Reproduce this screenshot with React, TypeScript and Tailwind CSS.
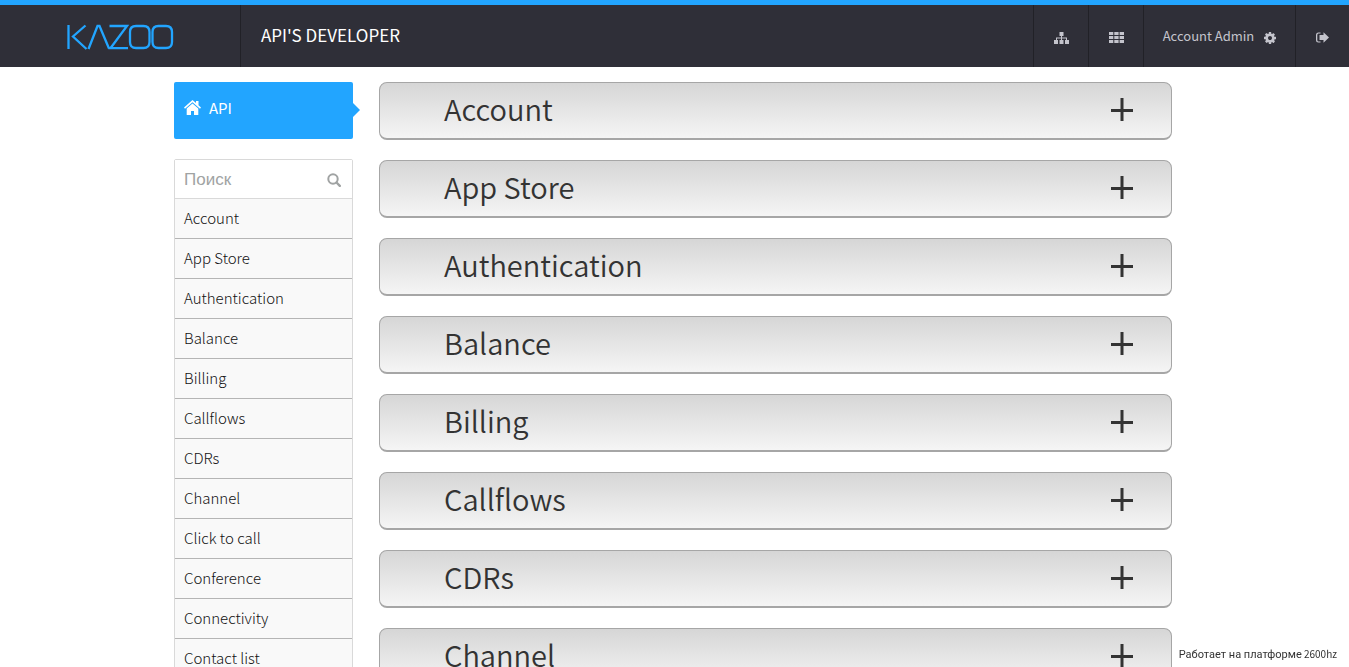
import React from "react";

const topics = [
  "Account", "App Store", "Authentication", "Balance", "Billing", "Callflows",
  "CDRs", "Channel", "Click to call", "Conference", "Connectivity", "Contact list",
];

function Logo() {
  return (
    <svg viewBox="0 0 108 28" className="h-7 w-[108px]" fill="none" stroke="#22a5ff" strokeWidth="2.300">
      <path d="M2.500 2v24M19.500 2.500L7 13.500 20.500 26M22.500 26L31.500 3h2L43 25.500M43.500 3H61L44.500 25.200H62" />
      <path d="M70 3h7.500q6 0 6 6v10q0 6-6 6H70q-6 0-6-6V9q0-6 6-6zM92.500 3h7.500q6 0 6 6v10q0 6-6 6h-7.500q-6 0-6-6V9q0-6 6-6z" />
    </svg>
  );
}

function SitemapIcon() {
  return (
    <svg viewBox="0 0 15 12" className="h-3 w-[15px]" fill="currentColor">
      <path d="M5.500 0h4v4H8v1.500h5V8h2v4h-4V8h1V6.500H8V8h1.500v4h-4V8H7V6.500H3V8h1v4H0V8h2V5.500h5V4H5.500z" />
    </svg>
  );
}

function GridIcon() {
  return (
    <svg viewBox="0 0 15 11" className="h-[11px] w-[15px]" fill="currentColor">
      <path d="M0 0h4.300v3H0zM5.300 0h4.300v3H5.300zM10.600 0H15v3h-4.400zM0 4h4.300v3H0zM5.300 4h4.300v3H5.300zM10.600 4H15v3h-4.400zM0 8h4.300v3H0zM5.300 8h4.300v3H5.300zM10.600 8H15v3h-4.400z" />
    </svg>
  );
}

function CogIcon() {
  return (
    <svg viewBox="0 128 1536 1536" className="mt-1 size-3" fill="currentColor">
      <path d="M1024 896q0-106-75-181t-181-75-181 75-75 181 75 181 181 75 181-75 75-181zm512-109v222q0 12-8 23t-20 13l-185 28q-19 54-39 91 35 50 107 138 10 12 10 25t-9 23q-27 37-99 108t-94 71q-12 0-26-9l-138-108q-44 23-91 38-16 136-29 186-7 28-36 28h-222q-14 0-24.500-8.500t-11.500-21.500l-28-184q-49-16-90-37l-141 107q-10 9-25 9-14 0-25-11-126-114-165-168-7-10-7-23 0-12 8-23 15-21 51-66.500t54-70.500q-27-50-41-99l-183-27q-13-2-21-12.500t-8-23.500v-222q0-12 8-23t19-13l186-28q14-46 39-92-40-57-107-138-10-12-10-24 0-10 9-23 26-36 98.500-107.500t94.500-71.500q13 0 26 10l138 107q44-23 91-38 16-136 29-186 7-28 36-28h222q14 0 24.500 8.500t11.500 21.500l28 184q49 16 90 37l142-107q9-9 24-9 13 0 25 10 129 119 165 170 7 8 7 22 0 12-8 23-15 21-51 66.500t-54 70.500q26 50 41 98l183 28q13 2 21 12.500t8 23.500z" />
    </svg>
  );
}

function SignOutIcon() {
  return (
    <svg viewBox="0 0 13 11" className="h-[11px] w-[13px]" fill="currentColor">
      <path d="M4.500 .5v1H2.500Q1.300 1.500 1.300 3v5q0 1.500 1.200 1.500h2v1h-2Q0 10.500 0 8V3Q0 .5 2.500 .5zM7.500 .2L13 5.500 7.500 10.800V8H3.500V3h4z" />
    </svg>
  );
}

function HomeIcon() {
  return (
    <svg viewBox="0 0 17 15" className="mb-0.5 h-[15px] w-[17px]" fill="currentColor">
      <path d="M8.500 0L12 3V1h2.500v4.200L17 7.500l-1 1.200L8.500 2.200 1 8.700 0 7.500z" />
      <path d="M8.500 3.500L14.300 8.600V15H10v-4H7v4H2.700V8.600z" />
    </svg>
  );
}

function SearchIcon() {
  return (
    <svg viewBox="0 0 14 14" className="size-[14px] shrink-0" fill="none" stroke="currentColor" strokeWidth="2">
      <circle cx="6" cy="6" r="4.700" />
      <path d="M9.500 9.500l3.300 3.300" strokeWidth="2.400" strokeLinecap="round" />
    </svg>
  );
}

const cell = "flex h-full items-center justify-center border-l border-[#212127] text-[#c4c4cc]";

export default function App() {
  return (
    <div className="flex h-screen flex-col bg-white font-['Noto_Sans_CJK_SC','Noto_Sans',sans-serif] text-[#2f2f38]">
      <header className="flex h-[67px] shrink-0 items-center border-t-5 border-[#22a5ff] bg-[#2f2f38]">
        <a href="#home" aria-label="Kazoo" className="flex w-60 shrink-0 justify-center pt-0.5"><Logo /></a>
        <h1 className="flex h-full flex-1 items-center border-l border-[#212127] pb-0.5 pl-5 text-[17px] text-white">API'S DEVELOPER</h1>
        <nav className="flex h-full">
          <button aria-label="Accounts" className={cell + " w-[55px] pt-1"}><SitemapIcon /></button>
          <button aria-label="Apps" className={cell + " w-[55px] pt-0.5"}><GridIcon /></button>
          <button className={cell + " w-[152px] gap-2.5 text-[13px]"}>Account Admin <CogIcon /></button>
          <button aria-label="Sign out" className={cell + " w-[54px] pt-0.5"}><SignOutIcon /></button>
        </nav>
      </header>

      <div className="flex-1 overflow-y-auto pt-[15px] [scrollbar-width:none]">
        <div className="mx-auto flex max-w-[1001px] items-start gap-[26px] pr-[3px]">
          <aside className="w-[179px] shrink-0">
            <a href="#api" className="relative flex h-[57px] items-center gap-2 rounded-xs bg-[#22a5ff] pb-1 pl-2.5 text-[15px] text-white">
              <HomeIcon />
              API
              <span className="absolute top-[21px] left-full border-y-7 border-l-7 border-y-transparent border-l-[#22a5ff]" />
            </a>
            <div className="mt-5 rounded-t-xs border border-[#d9d9d9] bg-[#f9f9f9]">
              <label className="flex h-[39px] items-center border-b border-[#d9d9d9] bg-white pt-px pr-[11px] pl-[9px] text-[#a0a3a3]">
                <input type="search" aria-label="Поиск" placeholder="Поиск" className="w-full min-w-0 flex-1 font-['Liberation_Sans',sans-serif] text-[17px] outline-none placeholder:text-[#a0a3a3]" />
                <SearchIcon />
              </label>
              <ul>
                {topics.map((t) => (
                  <li key={t}>
                    <a href={"#" + t} className="flex h-10 items-center border-b border-[#b5b5b5] pl-[9px] text-[15px] font-light text-[#111111]">{t}</a>
                  </li>
                ))}
              </ul>
            </div>
          </aside>
          <main className="flex min-w-0 flex-1 flex-col gap-5">
            {topics.map((t) => (
              <button key={t} className="flex h-[58px] shrink-0 items-center justify-between rounded-lg border border-b-2 border-[#a6a6a6] bg-linear-to-b from-[#d6d6d6] to-[#f5f5f5] pr-[37px] pl-16 text-left text-[29px] font-[350] text-[#333333]">
                <span className="pb-1">{t}</span>
                <svg viewBox="0 0 24 24" className="mb-0.5 size-6" fill="#333333"><path d="M1 11h9.500V0h3v11H23v3h-9.500v9h-3v-9H1z" /></svg>
              </button>
            ))}
          </main>
        </div>
      </div>
      <footer className="fixed right-3 bottom-1 text-[10px] leading-4 text-[#333333]">
        <span className="font-['Roboto',sans-serif] text-[11px]">Работает на платформе</span> 2600hz
      </footer>
    </div>
  );
}
